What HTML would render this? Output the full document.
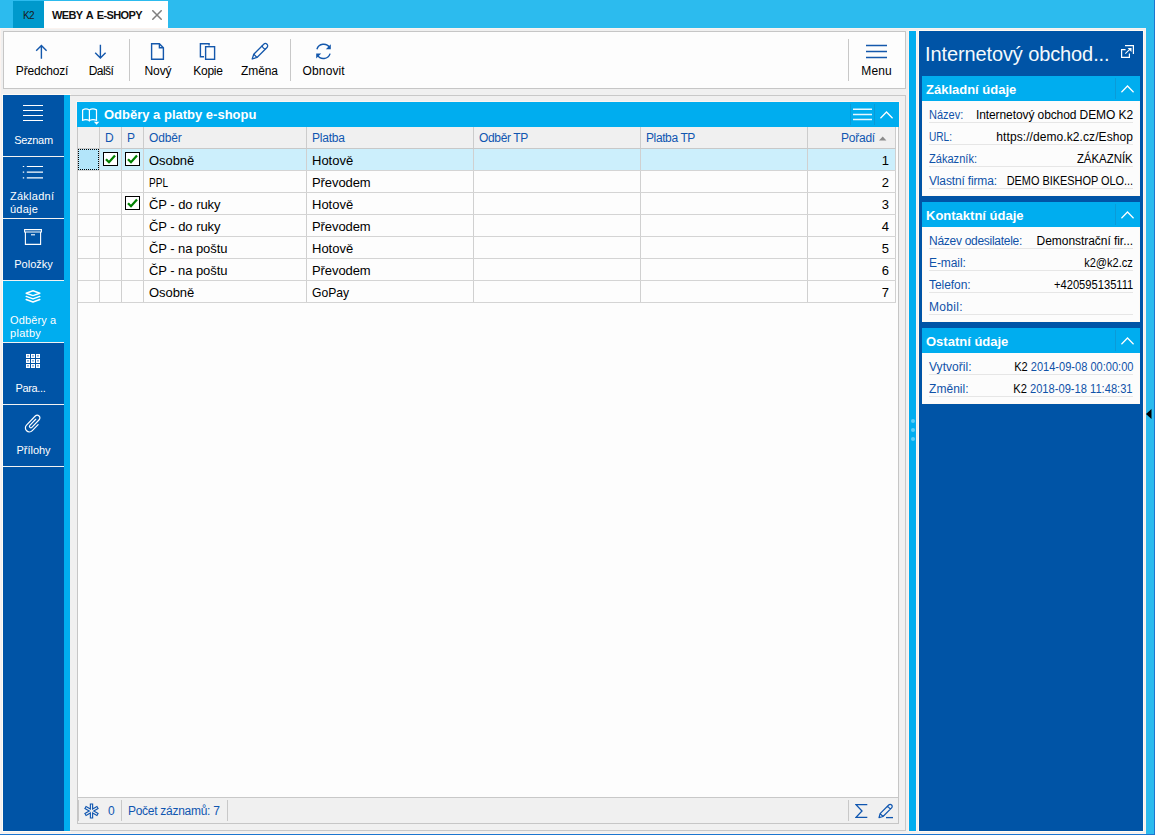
<!DOCTYPE html>
<html lang="cs">
<head>
<meta charset="utf-8">
<title>WEBY A E-SHOPY</title>
<style>
*{box-sizing:border-box;margin:0;padding:0}
html,body{width:1155px;height:835px;overflow:hidden}
body{position:relative;background:#2cbbee;font-family:"Liberation Sans",sans-serif;font-size:12px;color:#000}
.abs{position:absolute}
#edgeR{left:1154px;top:0;width:1px;height:835px;background:#1b76d0}
#edgeB{left:0;top:834px;width:1155px;height:1px;background:#1b76d0}
#grey{left:0;top:28px;width:1146px;height:806px;background:#f0f0f0;border:1px solid #fbf3ef}
#ol1{left:2px;top:94px;width:69px;height:738px;background:#fffbf5}
#ol2{left:908px;top:30px;width:9px;height:802px;background:#fbf3ef}
#ol3{left:918px;top:30px;width:226px;height:802px;background:#fffbf5}
#split{left:909px;top:31px;width:7px;height:800px;background:#00adef}
.dot{position:absolute;left:1.5px;width:4px;height:4px;border-radius:50%;background:#5ccdf7}
/* tabs */
#tabK2{left:13px;top:1px;width:31px;height:27px;background:#0099cc;font-size:10px;text-align:center;line-height:29px;color:#1a1a1a;letter-spacing:-0.6px}
#tabW{left:44px;top:1px;width:124px;height:27px;background:#fff;font-size:11px;font-weight:bold;line-height:29px;padding-left:8px;color:#111;letter-spacing:-0.62px;word-spacing:1.500px;white-space:nowrap}
/* toolbar */
#tb{left:3px;top:31px;width:903px;height:58px;background:#fdfdfd;border:1px solid #c6c6c6}
.tbi{position:absolute;top:0;height:56px;text-align:center;white-space:nowrap;font-size:12px;color:#000}
.tbi>span{position:absolute;left:50%;transform:translateX(-50%);top:32px;line-height:14px}
.tbi svg{position:absolute;overflow:visible}
.sep{position:absolute;top:7px;width:1px;height:42px;background:#c8c8c8}
/* sidebar */
#sb{left:3px;top:95px;width:61px;height:736px;background:#0054a6}
#sbl{left:64px;top:95px;width:6px;height:736px;background:#00adef}
.sbi{position:absolute;left:0;width:61px;height:62px;border-bottom:1px solid #f2f2f2;color:#fff;font-size:11px}
.sbi.act{background:#00adef}
.sbi svg{position:absolute;overflow:visible}
.sbi .t1{position:absolute;left:0;width:61px;text-align:center;top:39px;line-height:13px;white-space:nowrap}
.sbi .t2{position:absolute;left:7px;top:33px;line-height:13px;white-space:nowrap;letter-spacing:0.250px}
/* container */
#cont{left:70px;top:95px;width:836px;height:736px;border:1px solid #c8c8c8;border-left:none;background:#f0f0f0}
#panel{left:77px;top:102px;width:822px;height:722px;border:1px solid #c6c6c6;background:#fdfdfd}
#phead{left:77px;top:102px;width:822px;height:25px;background:#00adef;color:#fff;font-weight:bold;font-size:13px}
#phead .ttl{position:absolute;left:27px;top:0;line-height:26px;white-space:nowrap}
.hsep{position:absolute;top:2px;width:1px;height:21px;background:#0a9bd8}
/* grid */
#grid{left:78px;top:127px;width:818px;height:176px}
.row{position:absolute;left:0;width:818px;height:22px;border-bottom:1px solid #d4d4d4;font-size:13px;line-height:23px;white-space:nowrap}
.row.h{background:#f0f0f0;color:#0f56b0;font-size:12px;line-height:22px;border-bottom:1px solid #c8c8c8}
.row.sel{background:#cceffc}
.c{position:absolute;top:0;height:21px;border-right:1px solid #d0d0d0;padding-left:5px;overflow:hidden}
.row.h .c{border-right:1px solid #cccccc}
.c0{left:0;width:22px}.c1{left:22px;width:22px}.c2{left:44px;width:22px}.c3{left:66px;width:163px}
.c4{left:229px;width:167px}.c5{left:396px;width:167px}.c6{left:563px;width:167px}.c7{left:730px;width:88px;text-align:right;padding-right:6px}
.cb{position:absolute;left:3px;top:3px;width:15px;height:14px;border:1px solid #000;background:#fff}
.cb svg{position:absolute;left:1px;top:1px}
#status{left:78px;top:797px;width:820px;height:26px;background:#f0f0f0;border-top:1px solid #c8c8c8;color:#0f56b0;font-size:12px}
.ssep{position:absolute;top:2px;width:1px;height:21px;background:#c8c8c8}
/* right panel */
#rp{left:919px;top:31px;width:224px;height:800px;background:#0054a6}
#rpt{left:925px;top:41px;font-size:20px;color:#f4f9fd;white-space:nowrap;line-height:26px}
.card{position:absolute;left:922px;width:218px;background:#fcfcfc;border:1px solid #fffaf4;border-top:none}
.ch{position:absolute;left:-1px;top:0;width:218px;height:25px;background:#00adef;color:#fff;font-weight:bold;font-size:13px;line-height:25px;padding-left:4px;white-space:nowrap;line-height:27px}
.ch i{position:absolute;left:193px;top:2px;width:1px;height:21px;background:#0a9bd8}
.fr{position:absolute;left:6px;width:204px;height:22px;border-bottom:1px solid #e6e6e6;font-size:12px;line-height:28px;white-space:nowrap}
.fr b{font-weight:normal;color:#0f52a8;position:absolute;left:0;top:0}
.fr>span{position:absolute;right:0;top:0;color:#000}
.fr em{font-style:normal;color:#0f52a8}
</style>
</head>
<body>
<div class="abs" id="grey"></div>
<div class="abs" id="ol1"></div><div class="abs" id="ol2"></div><div class="abs" id="ol3"></div>
<div class="abs" id="split"><div class="dot" style="top:388px"></div><div class="dot" style="top:397px"></div><div class="dot" style="top:406px"></div></div>
<div class="abs" id="edgeR"></div>
<div class="abs" id="edgeB"></div>

<div class="abs" id="tabK2">K2</div>
<div class="abs" id="tabW">WEBY A E-SHOPY
<svg class="abs" style="left:108px;top:8.700px" width="10" height="10" viewBox="0 0 10 10"><path d="M0.3 0.3L9.7 9.7M9.7 0.3L0.3 9.7" stroke="#7f7f7f" stroke-width="1.5" fill="none"/></svg>
</div>

<div class="abs" id="tb">
  <svg class="abs" style="left:-4px;top:-32px;overflow:visible" width="910" height="60" viewBox="0 0 910 60" fill="none" stroke="#1458ac" stroke-width="1.400">
    <path d="M41.400 58.800V45.400M36.200 50.700L41.400 45.400L46.600 50.700"/>
    <path d="M100.400 44.700V58M95.200 52.700L100.400 58L105.600 52.700"/>
    <path d="M151.600 43.700H159.400L163.400 47.700V59.300H151.600ZM159.400 43.700V47.700H163.400"/>
    <path d="M204 56.700H200.400V43.700H209.100V45.600"/><rect x="205.600" y="46.700" width="9" height="12.600"/>
    <g transform="translate(252.200 59) rotate(-45)" stroke-width="1.300" stroke-linejoin="round"><path d="M0 0L4.500 -2.300H18.600A2.300 2.300 0 0 1 18.600 2.300H4.500Z"/><path d="M4.500 -2.300V2.300M17 -2.300A1.300 2.300 0 0 0 17 2.300"/></g>
    <path d="M316.900 49.200A7.100 7.100 0 0 1 329.700 47.600M330.100 53.600A7.100 7.100 0 0 1 317.300 55.200"/>
    <path d="M330.800 44.300V49.300H325.800ZM316.200 58.500V53.500H321.200Z" fill="#1458ac" stroke="none"/>
    <path d="M866 45.500H887M866 51.500H887M866 57.500H887"/>
  </svg>
  <div class="tbi" style="left:10px;width:56px">
    <span><span class="k" style="letter-spacing:-0.19px">Předchozí</span></span></div>
  <div class="tbi" style="left:82px;width:30px">
    <span><span class="k" style="letter-spacing:-0.57px">Další</span></span></div>
  <div class="sep" style="left:125px"></div>
  <div class="tbi" style="left:139px;width:30px">
    <span><span class="k" style="letter-spacing:-0.09px">Nový</span></span></div>
  <div class="tbi" style="left:189px;width:30px">
    <span><span class="k" style="letter-spacing:-0.28px">Kopie</span></span></div>
  <div class="tbi" style="left:236.500px;width:38px">
    <span><span class="k" style="letter-spacing:-0.11px">Změna</span></span></div>
  <div class="sep" style="left:286px"></div>
  <div class="tbi" style="left:298.700px;width:42px">
    <span><span class="k" style="letter-spacing:0.12px">Obnovit</span></span></div>
  <div class="sep" style="left:844px"></div>
  <div class="tbi" style="left:856.500px;width:32px">
    <span><span class="k" style="letter-spacing:0.1px">Menu</span></span></div>
</div>

<div class="abs" id="sb">
  <div class="sbi" style="top:0">
    <svg style="left:20px;top:9px" width="20" height="18" viewBox="0 0 20 18"><path d="M0 1.5H20M0 6.5H20M0 11.5H20M0 16.5H20" stroke="#fff" stroke-width="1.2"/></svg>
    <div class="t1"><span class="k" style="letter-spacing:-0.31px">Seznam</span></div></div>
  <div class="sbi" style="top:62px">
    <svg style="left:19px;top:7.700px" width="22" height="14" viewBox="0 0 22 14"><path d="M4.8 1.5H21M4.8 7.2H21M4.8 12.9H21" stroke="#fff" stroke-width="1.2"/><path d="M0.8 1.5H2.2M0.8 7.2H2.2M0.8 12.9H2.2" stroke="#fff" stroke-width="1.2"/></svg>
    <div class="t2">Základní<br>údaje</div></div>
  <div class="sbi" style="top:124px">
    <svg style="left:21px;top:10px" width="18" height="16" viewBox="0 0 18 16"><path d="M0.6 0.6H17.4V3H0.6ZM1.4 3V15.4H16.6V3" stroke="#fff" stroke-width="1.1" fill="none"/><path d="M7 5.8H11" stroke="#fff" stroke-width="1.1"/></svg>
    <div class="t1">Položky</div></div>
  <div class="sbi act" style="top:186px">
    <svg style="left:22px;top:9px" width="16" height="13" viewBox="0 0 16 13"><path d="M8 0.800L14.800 3.200L8 5.600L1.200 3.200Z" stroke="#fff" stroke-width="1.500" fill="none" stroke-linejoin="round"/><path d="M1.200 6.400L8 8.900L14.800 6.400M1.200 9.500L8 12L14.800 9.500" stroke="#fff" stroke-width="1.500" fill="none" stroke-linejoin="round" stroke-linecap="round"/></svg>
    <div class="t2" style="letter-spacing:0.120px">Odběry a<br><span style="letter-spacing:0.300px">platby</span></div></div>
  <div class="sbi" style="top:248px">
    <svg style="left:22px;top:10px" width="16" height="16" viewBox="0 0 16 16"><g fill="#fff"><rect x="1" y="1" width="4" height="4"/><rect x="6" y="1" width="4" height="4"/><rect x="11" y="1" width="4" height="4"/><rect x="1" y="6" width="4" height="4"/><rect x="6" y="6" width="4" height="4"/><rect x="11" y="6" width="4" height="4"/><rect x="1" y="11" width="4" height="4"/><rect x="6" y="11" width="4" height="4"/><rect x="11" y="11" width="4" height="4"/></g><g fill="#86aedb"><rect x="2" y="2" width="2" height="1.600"/><rect x="7" y="2" width="2" height="1.600"/><rect x="12" y="2" width="2" height="1.600"/><rect x="2" y="7" width="2" height="1.600"/><rect x="7" y="7" width="2" height="1.600"/><rect x="12" y="7" width="2" height="1.600"/><rect x="2" y="12" width="2" height="1.600"/><rect x="7" y="12" width="2" height="1.600"/><rect x="12" y="12" width="2" height="1.600"/></g></svg>
    <div class="t1" style="left:-3px"><span class="k" style="letter-spacing:-0.34px">Para...</span></div></div>
  <div class="sbi" style="top:310px">
    <svg style="left:0;top:0" width="61" height="40" viewBox="0 0 61 40"><g transform="translate(30.200 18.200) rotate(-46)"><path d="M2.400 4.500H-6A4 4 0 0 1 -6 -3.500H6.600A2.700 2.700 0 0 1 6.600 1.900H-3.900A1.400 1.400 0 0 1 -3.900 -0.900H4.600" stroke="#fff" stroke-width="1.200" fill="none" stroke-linecap="round"/></g></svg>
    <div class="t1">Přílohy</div></div>
</div>
<div class="abs" id="sbl"></div>

<div class="abs" id="cont"></div>
<div class="abs" id="panel"></div>
<div class="abs" style="left:76px;top:101px;width:824px;height:26px;background:#fdf5f0"></div>
<div class="abs" id="phead">
  <svg class="abs" style="left:0;top:0" width="25" height="25" viewBox="0 0 25 25"><path d="M5.600 18.400V7.900Q9 6 12.400 7.900Q15.900 6 19.500 7.900V18.400M12.400 7.900V19.600" stroke="#fff" stroke-width="1.200" fill="none"/><path d="M5 18.500Q9 16.600 12.400 18.500Q15.900 16.600 20.100 18.500" stroke="#fff" stroke-width="1.200" fill="none"/><path d="M16.900 19.700H22.300L19.600 22.700Z" fill="#fff"/></svg>
  <div class="ttl">Odběry a platby e-shopu</div>
  <div class="hsep" style="left:773px"></div>
  <svg class="abs" style="left:776px;top:6px" width="19" height="13" viewBox="0 0 19 13"><path d="M0 1.2H19M0 6.4H19M0 11.6H19" stroke="#e8f7fe" stroke-width="1.5"/></svg>
  <div class="hsep" style="left:797px"></div>
  <svg class="abs" style="left:803px;top:9px" width="13" height="8" viewBox="0 0 13 8"><path d="M0.4 7.2L6.500 1L12.600 7.2" stroke="#fff" stroke-width="1.3" fill="none"/></svg>
</div>

<div class="abs" id="grid">
  <div class="row h" style="top:0"><div class="c c0"></div><div class="c c1">D</div><div class="c c2">P</div><div class="c c3"><span class="k" style="letter-spacing:-0.17px">Odběr</span></div><div class="c c4"><span class="k" style="letter-spacing:-0.22px">Platba</span></div><div class="c c5"><span class="k" style="letter-spacing:-0.35px">Odběr TP</span></div><div class="c c6"><span class="k" style="letter-spacing:-0.39px">Platba TP</span></div><div class="c c7" style="padding-right:20px"><span class="k" style="letter-spacing:-0.21px">Pořadí</span><svg class="abs" style="left:71px;top:8.500px" width="8" height="5" viewBox="0 0 8 5"><path d="M0 4.400L3.700 0.600L7.400 4.400Z" fill="#8a8a8a"/></svg></div></div>
  <div class="row sel" style="top:22px"><div class="c c0"></div><div class="abs" style="left:0;top:0;width:21px;height:21px;background:#b3e5fa;border:1px dotted #000"></div><div class="c c1"><div class="cb"><svg width="11" height="10" viewBox="0 0 11 10"><path d="M1 5.200L4 8.2L10 1.600" stroke="#008000" stroke-width="2.300" fill="none"/></svg></div></div><div class="c c2"><div class="cb"><svg width="11" height="10" viewBox="0 0 11 10"><path d="M1 5.200L4 8.2L10 1.600" stroke="#008000" stroke-width="2.300" fill="none"/></svg></div></div><div class="c c3"><span class="k" style="letter-spacing:-0.06px">Osobně</span></div><div class="c c4">Hotově</div><div class="c c5"></div><div class="c c6"></div><div class="c c7">1</div></div>
  <div class="row" style="top:44px"><div class="c c0"></div><div class="c c1"></div><div class="c c2"></div><div class="c c3"><span class="k" style="display:inline-block;transform:scaleX(0.773);transform-origin:0 50%">PPL</span></div><div class="c c4"><span class="k" style="letter-spacing:-0.08px">Převodem</span></div><div class="c c5"></div><div class="c c6"></div><div class="c c7">2</div></div>
  <div class="row" style="top:66px"><div class="c c0"></div><div class="c c1"></div><div class="c c2"><div class="cb"><svg width="11" height="10" viewBox="0 0 11 10"><path d="M1 5.200L4 8.2L10 1.600" stroke="#008000" stroke-width="2.300" fill="none"/></svg></div></div><div class="c c3"><span class="k" style="letter-spacing:-0.04px">ČP - do ruky</span></div><div class="c c4">Hotově</div><div class="c c5"></div><div class="c c6"></div><div class="c c7">3</div></div>
  <div class="row" style="top:88px"><div class="c c0"></div><div class="c c1"></div><div class="c c2"></div><div class="c c3"><span class="k" style="letter-spacing:-0.04px">ČP - do ruky</span></div><div class="c c4"><span class="k" style="letter-spacing:-0.08px">Převodem</span></div><div class="c c5"></div><div class="c c6"></div><div class="c c7">4</div></div>
  <div class="row" style="top:110px"><div class="c c0"></div><div class="c c1"></div><div class="c c2"></div><div class="c c3"><span class="k" style="letter-spacing:-0.07px">ČP - na poštu</span></div><div class="c c4">Hotově</div><div class="c c5"></div><div class="c c6"></div><div class="c c7">5</div></div>
  <div class="row" style="top:132px"><div class="c c0"></div><div class="c c1"></div><div class="c c2"></div><div class="c c3"><span class="k" style="letter-spacing:-0.07px">ČP - na poštu</span></div><div class="c c4"><span class="k" style="letter-spacing:-0.08px">Převodem</span></div><div class="c c5"></div><div class="c c6"></div><div class="c c7">6</div></div>
  <div class="row" style="top:154px"><div class="c c0"></div><div class="c c1"></div><div class="c c2"></div><div class="c c3"><span class="k" style="letter-spacing:-0.06px">Osobně</span></div><div class="c c4"><span class="k" style="display:inline-block;transform:scaleX(0.936);transform-origin:0 50%">GoPay</span></div><div class="c c5"></div><div class="c c6"></div><div class="c c7">7</div></div>
</div>

<div class="abs" id="status">
  <svg class="abs" style="left:5px;top:4.500px" width="17" height="16" viewBox="0 0 17 16"><g stroke="#0f56b0" stroke-width="3.400" stroke-linecap="butt"><path d="M8.500 0.5V15.5M2 4.200L15 11.800M15 4.200L2 11.800"/></g><g stroke="#f0f0f0" stroke-width="1.100"><path d="M8.500 1.500V14.500M2.900 4.700L14.100 11.300M14.100 4.700L2.900 11.300"/></g></svg>
  <div class="abs" style="left:30px;top:0;line-height:26px">0</div>
  <div class="ssep" style="left:0"></div><div class="ssep" style="left:43px"></div>
  <div class="abs" style="left:50px;top:0;line-height:26px;white-space:nowrap"><span class="k" style="letter-spacing:-0.28px">Počet záznamů: 7</span></div>
  <div class="ssep" style="left:149px"></div>
  <div class="ssep" style="left:770px"></div>
  <svg class="abs" style="left:777px;top:6px" width="13" height="14" viewBox="0 0 13 14"><path d="M12.300 0.700H1L7 7L1 13.300H12.300" stroke="#0f56b0" stroke-width="1.3" fill="none"/></svg>
  <svg class="abs" style="left:800px;top:5px" width="16" height="16" viewBox="0 0 16 16"><path d="M1 14.600L2.100 10.600L10.700 2A2 2 0 0 1 13.600 4.900L5 13.500ZM2.100 10.600L5 13.500M9.500 3.200L12.400 6.100" stroke="#0f56b0" stroke-width="1.2" fill="none" stroke-linejoin="round"/><path d="M8 14.600H15" stroke="#0f56b0" stroke-width="1.3"/></svg>
</div>

<div class="abs" id="rp"></div>
<div class="abs" id="rpt"><span class="k" style="letter-spacing:-0.11px">Internetový obchod...</span></div>
<svg class="abs" style="left:1120px;top:44px" width="15" height="15" viewBox="0 0 15 15"><path d="M5.600 5.600H1.600V13.400H9.400V9.400M5 1.600H13.400V10" stroke="#fff" stroke-width="1.200" fill="none"/><path d="M5.300 9.700L10.800 4.400" stroke="#fff" stroke-width="1.100" fill="none"/><path d="M7.600 4.100H11.500V8Z" fill="#fff"/></svg>

<div class="card" style="top:76px;height:120px"><div class="ch">Základní údaje<i></i><svg class="abs" style="left:199px;top:9px" width="13" height="8" viewBox="0 0 13 8"><path d="M0.4 7.2L6.500 1L12.600 7.2" stroke="#fff" stroke-width="1.3" fill="none"/></svg></div>
  <div class="fr" style="top:25px"><b><span class="k" style="display:inline-block;transform:scaleX(0.918);transform-origin:0 50%">Název:</span></b><span><span class="k" style="letter-spacing:-0.09px">Internetový obchod DEMO K2</span></span></div>
  <div class="fr" style="top:47px"><b><span class="k" style="display:inline-block;transform:scaleX(0.841);transform-origin:0 50%">URL:</span></b><span><span class="k" style="letter-spacing:0.08px">https://demo.k2.cz/Eshop</span></span></div>
  <div class="fr" style="top:69px"><b><span class="k" style="display:inline-block;transform:scaleX(0.9225);transform-origin:0 50%">Zákazník:</span></b><span><span class="k" style="display:inline-block;transform:scaleX(0.951);transform-origin:100% 50%">ZÁKAZNÍK</span></span></div>
  <div class="fr" style="top:91px"><b><span class="k" style="letter-spacing:-0.15px">Vlastní firma:</span></b><span><span class="k" style="display:inline-block;transform:scaleX(0.909);transform-origin:100% 50%">DEMO BIKESHOP OLO...</span></span></div>
</div>
<div class="card" style="top:202px;height:120px"><div class="ch">Kontaktní údaje<i></i><svg class="abs" style="left:199px;top:9px" width="13" height="8" viewBox="0 0 13 8"><path d="M0.4 7.2L6.500 1L12.600 7.2" stroke="#fff" stroke-width="1.3" fill="none"/></svg></div>
  <div class="fr" style="top:25px"><b><span class="k" style="letter-spacing:-0.28px">Název odesilatele:</span></b><span><span class="k" style="letter-spacing:-0.05px">Demonstrační fir...</span></span></div>
  <div class="fr" style="top:47px"><b><span class="k" style="letter-spacing:-0.09px">E-mail:</span></b><span><span class="k" style="display:inline-block;transform:scaleX(0.921);transform-origin:100% 50%">k2@k2.cz</span></span></div>
  <div class="fr" style="top:69px"><b><span class="k" style="letter-spacing:-0.06px">Telefon:</span></b><span><span class="k" style="display:inline-block;transform:scaleX(0.930);transform-origin:100% 50%">+420595135111</span></span></div>
  <div class="fr" style="top:91px"><b><span class="k" style="letter-spacing:0.31px">Mobil:</span></b><span></span></div>
</div>
<div class="card" style="top:328px;height:76px"><div class="ch">Ostatní údaje<i></i><svg class="abs" style="left:199px;top:9px" width="13" height="8" viewBox="0 0 13 8"><path d="M0.4 7.2L6.500 1L12.600 7.2" stroke="#fff" stroke-width="1.3" fill="none"/></svg></div>
  <div class="fr" style="top:25px"><b><span class="k" style="letter-spacing:0.05px">Vytvořil:</span></b><span style="transform:scaleX(0.9216);transform-origin:100% 50%">K2 <em>2014-09-08 00:00:00</em></span></div>
  <div class="fr" style="top:47px"><b><span class="k" style="letter-spacing:0.05px">Změnil:</span></b><span style="transform:scaleX(0.928);transform-origin:100% 50%">K2 <em>2018-09-18 11:48:31</em></span></div>
</div>
<svg class="abs" style="left:1146px;top:409px" width="6" height="10" viewBox="0 0 6 10"><path d="M0 5L5.500 0V10Z" fill="#000"/></svg>
</body>
</html>
